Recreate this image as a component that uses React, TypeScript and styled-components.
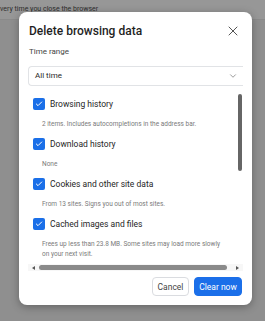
import { createGlobalStyle, styled } from "styled-components";
import { X, ChevronDown, Check } from "lucide-react";

const Global = createGlobalStyle`
  html, body {
    margin: 0;
    padding: 0;
    background: #8f8f8f;
    font-family: Roboto, "Liberation Sans", sans-serif;
  }
`;

const items = [
  { label: "Browsing history", desc: ["2 items. Includes autocompletions in the address bar."] },
  { label: "Download history", desc: ["None"] },
  { label: "Cookies and other site data", desc: ["From 13 sites. Signs you out of most sites."] },
  {
    label: "Cached images and files",
    desc: ["Frees up less than 23.8 MB. Some sites may load more slowly", "on your next visit."],
  },
];

const App = () => {
  return (
    <>
      <Global />
      <Page>
        <TopBand>
          <BackText>very time you close the browser</BackText>
        </TopBand>
      </Page>
      <Dialog>
        <Header>
          <Title>Delete browsing data</Title>
          <CloseButton aria-label="Close">
            <X size={16} strokeWidth={1.4} />
          </CloseButton>
        </Header>
        <FieldLabel>Time range</FieldLabel>
        <Select>
          <span>All time</span>
          <ChevronDown size={10} strokeWidth={1.6} />
        </Select>
        <ScrollArea>
          <List>
            {items.map((it) => (
              <Group key={it.label}>
                <Row>
                  <Box>
                    <Check size={8} strokeWidth={3} color="#fff" />
                  </Box>
                  <Label>{it.label}</Label>
                </Row>
                <Desc>
                  {it.desc.map((d) => (
                    <div key={d}>{d}</div>
                  ))}
                </Desc>
              </Group>
            ))}
          </List>
          <VTrack>
            <VThumb />
          </VTrack>
        </ScrollArea>
        <HTrack>
          <Arrow $dir="left" />
          <HThumb />
          <Arrow $dir="right" />
        </HTrack>
        <Actions>
          <Button $primary={false} $w={37}>
            Cancel
          </Button>
          <Button $primary $w={48}>
            Clear now
          </Button>
        </Actions>
      </Dialog>
    </>
  );
};

export default App;

const Page = styled.div`
  width: 265px;
  height: 321px;
  background: #8f8f8f;
`;

const TopBand = styled.div`
  height: 19px;
  background: #979797;
  border-bottom: 1px solid #8a8a8a;
  overflow: hidden;
`;

const BackText = styled.div`
  font-size: 7px;
  line-height: 18px;
  color: #2e2e2e;
  white-space: nowrap;
`;

const Dialog = styled.div`
  position: absolute;
  left: 19px;
  top: 12px;
  width: 233px;
  height: 293px;
  box-sizing: border-box;
  background: #fff;
  border-radius: 8px;
  box-shadow: 0 2px 8px rgba(0, 0, 0, 0.3);
  padding: 8px 9px 9px 9px;
  display: flex;
  flex-direction: column;
`;

const Header = styled.div`
  display: flex;
  align-items: center;
  justify-content: space-between;
  height: 22px;
`;

const Title = styled.div`
  font-size: 12px;
  font-weight: 500;
  color: #1f1f1f;
  padding-left: 1px;
`;

const CloseButton = styled.button`
  width: 20px;
  height: 20px;
  border: none;
  background: none;
  padding: 0;
  display: flex;
  align-items: center;
  justify-content: center;
  color: #474747;
`;

const FieldLabel = styled.div`
  margin-top: 3px;
  line-height: 14px;
  font-size: 8px;
  color: #444;
  padding-left: 1px;
`;

const Select = styled.div`
  margin-top: 7px;
  height: 20px;
  box-sizing: border-box;
  border: 1px solid #e1e3e6;
  border-right: none;
  border-radius: 4px 0 0 4px;
  padding: 0 5px 0 6px;
  display: flex;
  align-items: center;
  justify-content: space-between;
  font-size: 8px;
  color: #1f1f1f;
  svg {
    color: #6a6a6a;
  }
`;

const ScrollArea = styled.div`
  margin-top: 3px;
  height: 176px;
  display: flex;
`;

const List = styled.div`
  flex: 1;
  overflow: hidden;
  padding-top: 5.5px;
  padding-left: 5px;
`;

const Group = styled.div`
  display: flex;
  flex-direction: column;
`;

const Row = styled.div`
  height: 20px;
  display: flex;
  align-items: center;
  gap: 5px;
`;

const Box = styled.div`
  width: 12px;
  height: 12px;
  border-radius: 2px;
  background: #1a6fe8;
  display: flex;
  align-items: center;
  justify-content: center;
`;

const Label = styled.div`
  font-size: 8.5px;
  color: #262626;
`;

const Desc = styled.div`
  margin: 5px 0 5px 9px;
  font-size: 6.5px;
  line-height: 10px;
  color: #7a7a7a;
  white-space: nowrap;
`;

const VTrack = styled.div`
  width: 7px;
  display: flex;
  justify-content: center;
`;

const VThumb = styled.div`
  margin-top: 5px;
  width: 4px;
  height: 77px;
  border-radius: 2px;
  background: #666;
`;

const HTrack = styled.div`
  height: 7px;
  background: #f7f7f7;
  display: flex;
  align-items: center;
`;

const Arrow = styled.div<{ $dir: "left" | "right" }>`
  width: 0;
  height: 0;
  border-top: 2px solid transparent;
  border-bottom: 2px solid transparent;
  ${(p) =>
    p.$dir === "left"
      ? `border-right: 3px solid #555; margin-left: 4px;`
      : `border-left: 3px solid #555; margin-left: 9px;`}
`;

const HThumb = styled.div`
  margin-left: 4px;
  width: 188px;
  height: 5px;
  border-radius: 3px;
  background: #8a8a8a;
`;

const Actions = styled.div`
  margin-top: 6px;
  padding-right: 1px;
  display: flex;
  justify-content: flex-end;
  gap: 5px;
`;

const Button = styled.button<{ $primary: boolean; $w: number }>`
  width: ${(p) => p.$w}px;
  height: 19px;
  padding: 0;
  border-radius: 4px;
  font-family: Roboto, "Liberation Sans", sans-serif;
  font-size: 8.5px;
  border: 1px solid ${(p) => (p.$primary ? "#1b6fe9" : "#dadce0")};
  background: ${(p) => (p.$primary ? "#1b6fe9" : "#fff")};
  color: ${(p) => (p.$primary ? "#fff" : "#444")};
`;
